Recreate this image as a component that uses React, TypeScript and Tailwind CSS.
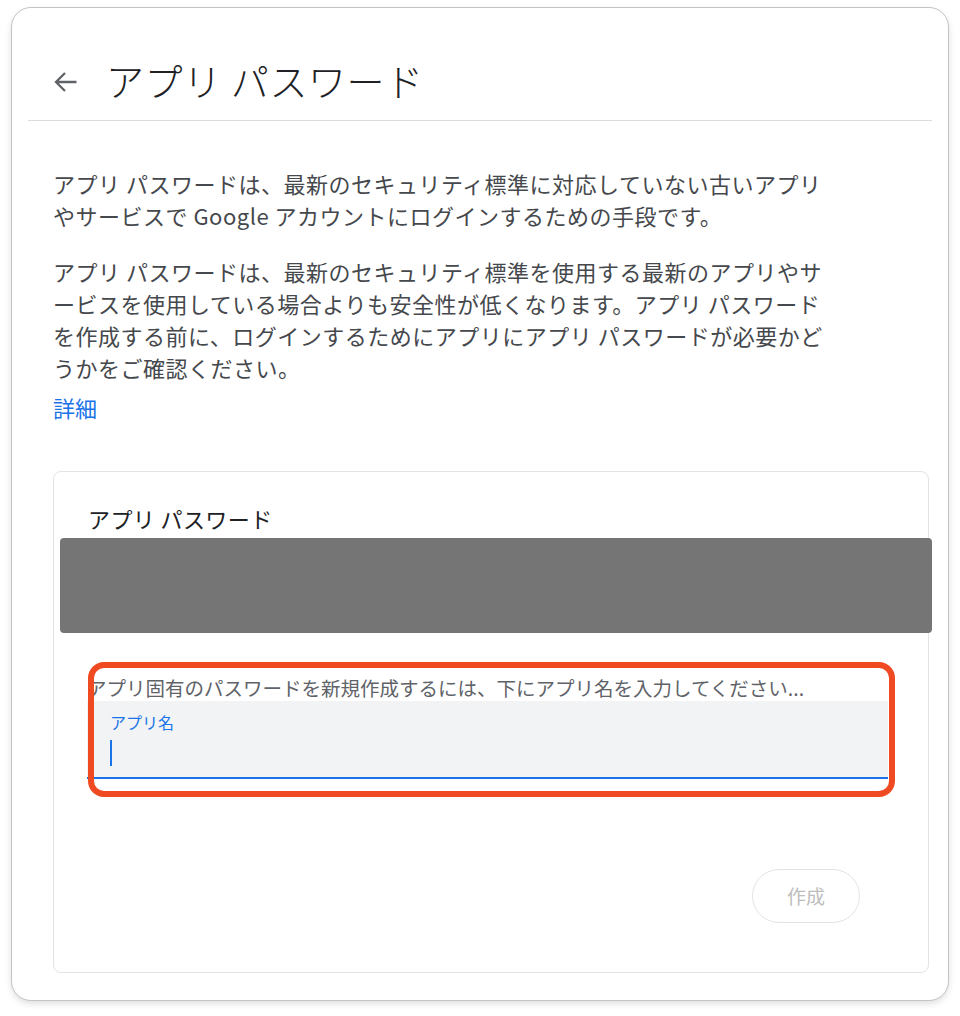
import React from "react";

const JP = { fontFamily: '"Noto Sans CJK JP", "Liberation Sans", sans-serif' };

export default function App() {
  return (
    <div className="w-[960px] h-[1016px] bg-white pt-[7px] pl-[11px]" style={JP}>
      <div className="relative w-[938px] h-[994px] rounded-[20px] border-[1.5px] border-[#c4c4c4] bg-white shadow-[0_3px_6px_rgba(0,0,0,0.12)]">
        {/* Header */}
        <div className="flex items-center h-[112px] pl-[42px] pt-[32px]">
          <svg width="24" height="22" viewBox="0 0 24 22" className="mt-[4px]">
            <path d="M22.5 11H2.5M11 2L2 11l9 9" fill="none" stroke="#5f6368" strokeWidth="2.3" strokeLinejoin="miter" />
          </svg>
          <h1 className="ml-[28px] text-[38px] leading-[44px] text-[#202124] font-light tracking-[0.6px]">
            アプリ パスワード
          </h1>
        </div>
        <div className="mx-4 h-px bg-[#dadce0]" />

        {/* Body */}
        <div className="pl-[41px] pr-[19px] pt-[46px]">
          <p className="text-[22px] leading-[32px] text-[#45484c] tracking-[0.5px] whitespace-nowrap">
            アプリ パスワードは、最新のセキュリティ標準に対応していない古いアプリ
            <br />
            やサービスで Google アカウントにログインするための手段です。
          </p>
          <p className="mt-[24px] text-[22px] leading-[32px] text-[#45484c] tracking-[0.5px] whitespace-nowrap">
            アプリ パスワードは、最新のセキュリティ標準を使用する最新のアプリやサ
            <br />
            ービスを使用している場合よりも安全性が低くなります。アプリ パスワード
            <br />
            を作成する前に、ログインするためにアプリにアプリ パスワードが必要かど
            <br />
            うかをご確認ください。
          </p>
          <div className="mt-[8px] text-[22px] leading-[32px] text-[#1a73e8]">詳細</div>

          {/* Card */}
          <div className="mt-[48px] w-[876px] h-[502px] rounded-[8px] border border-[#e3e3e3] flex flex-col">
            <div className="pl-[34px] pt-[30px] text-[22px] leading-[32px] text-[#202124] tracking-[0.4px]">
              アプリ パスワード
            </div>
            <div className="mt-[4px] ml-[6px] mr-[-4px] h-[95px] rounded-[4px] bg-[#757575]" />

            <div className="relative mt-[28px] ml-[33px] w-[801px]">
              <div className="h-[40px] pt-[14px] text-[19.5px] leading-[26px] text-[#5f6368] whitespace-nowrap">
                アプリ固有のパスワードを新規作成するには、下にアプリ名を入力してください...
              </div>
              <div className="h-[78px] bg-[#f1f3f4] border-b-2 border-[#1a73e8] pl-[23px] pt-[10px]">
                <div className="text-[16px] leading-[22px] text-[#1a73e8]">アプリ名</div>
                <div className="mt-[7px] w-[2px] h-[26px] bg-[#1a73e8]" />
              </div>
              {/* red annotation box */}
              <div className="absolute left-[1px] top-[1px] w-[807px] h-[135px] rounded-[16px] border-[6px] border-[#f04a22]" />
            </div>

            <div className="flex justify-end mt-auto mb-[49px] mr-[68px]">
              <div className="w-[108px] h-[54px] rounded-full border border-[#e3e3e3] flex items-center justify-center text-[19px] text-[#bdbdbd]">
                作成
              </div>
            </div>
          </div>
        </div>
      </div>
    </div>
  );
}
